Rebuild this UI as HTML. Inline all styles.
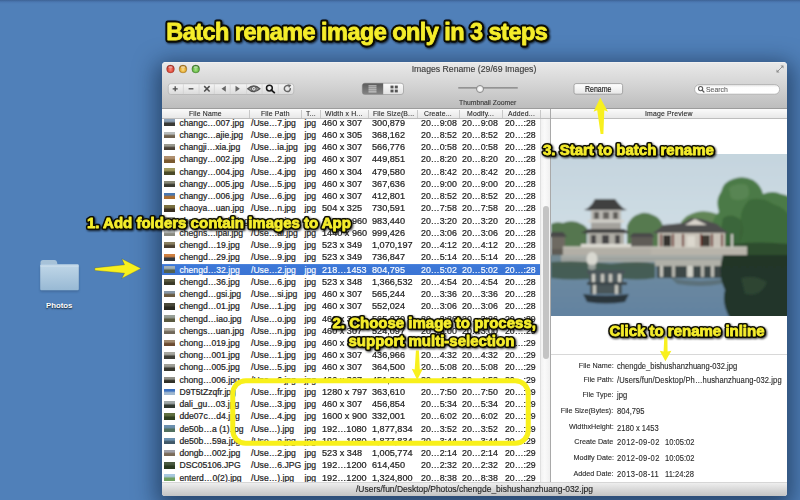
<!DOCTYPE html>
<html><head><meta charset="utf-8">
<style>
*{margin:0;padding:0;box-sizing:border-box}
html,body{width:800px;height:500px;overflow:hidden}
body{position:relative;background:linear-gradient(#3d6294 0,#4b78b2 2px,#5080b9 4px);font-family:"Liberation Sans",sans-serif;color:#222}
.a{position:absolute;white-space:nowrap}
#shadow{position:absolute;left:162px;top:62px;width:625px;height:434px;border-radius:4px;box-shadow:0 6px 22px 6px rgba(10,25,50,.55)}
#win{position:absolute;left:162px;top:62px;width:625px;height:434px;border-radius:4px 4px 3px 3px;overflow:hidden;background:#fff}
#toolbar{position:absolute;left:0;top:0;width:625px;height:47px;background:linear-gradient(#f4f4f4 0,#e8e8e8 1.5px,#d4d4d4 50%,#bdbdbd);border-bottom:1px solid #9c9c9c}
.tl{position:absolute;top:3px;width:8px;height:8px;border-radius:50%}
#title{position:absolute;left:0;top:2.3px;width:624px;text-align:center;font-size:9.1px;color:#3c3c3c;-webkit-text-stroke:0.15px #3c3c3c;transform:scaleX(0.956)}
#header{position:absolute;left:0;top:47px;width:625px;height:10px;background:linear-gradient(#fafafa,#e8e8e8);border-bottom:1px solid #bdbdbd}
#header span{position:absolute;top:0.3px;font-size:7.9px;line-height:9.5px;letter-spacing:0.2px;color:#262626;transform:scaleX(0.87);transform-origin:0 50%;-webkit-text-stroke:0.12px #2a2a2a}
.hsep{position:absolute;top:1px;width:1px;height:8px;background:#c8c8c8}
.row{position:absolute;left:0;width:378px;height:11px}
.row span{position:absolute;top:0.8px;font-size:8.6px;line-height:11px;color:#1e1e1e;white-space:nowrap;transform:scaleX(1.0);transform-origin:0 50%;-webkit-text-stroke:0.22px #1e1e1e}
.row.sel{background:linear-gradient(#5a8ee0 0,#3d78d8 1px,#3a74d4)}
.row.sel span{color:#fff;-webkit-text-stroke:0.15px #fff}
.th{position:absolute;left:2px;top:2.6px;width:11px;height:6.5px;display:block}
#status{position:absolute;left:0;top:420px;width:625px;height:14px;background:linear-gradient(#eeeeee,#dadada 45%,#c4c4c4);border-top:1px solid #d6d6d6}
.ann{position:absolute;white-space:nowrap;font-weight:bold;color:#fbf32d;
 text-shadow:-1px -1px 0 #1a1a08,1px -1px 0 #1a1a08,-1px 1px 0 #1a1a08,1px 1px 0 #1a1a08,0 1.5px 0 #1a1a08,1.5px 0 0 #1a1a08,-1.5px 0 0 #1a1a08,0 -1.5px 0 #1a1a08,1px 2px 3px rgba(0,0,0,.6)}
.info{position:absolute;font-size:8.5px;color:#2a2a2a;white-space:nowrap;transform:scaleX(0.892);transform-origin:0 50%;-webkit-text-stroke:0.12px #2a2a2a}
.lab{position:absolute;font-size:8px;color:#2a2a2a;white-space:nowrap;transform:scaleX(0.9);transform-origin:100% 50%;text-align:right;-webkit-text-stroke:0.12px #2a2a2a}
.btn{position:absolute;background:linear-gradient(#fdfdfd,#e4e4e4);border:1px solid #8a8a8a;border-radius:2px}
</style></head><body>
<div id="shadow"></div>
<div id="win">
  <div id="toolbar">
    <svg style="position:absolute;left:0;top:0" width="45" height="15">
<defs>
<radialGradient id="tr" cx="50%" cy="60%" r="55%"><stop offset="0" stop-color="#f58a7a"/><stop offset=".6" stop-color="#e0493a"/><stop offset="1" stop-color="#a8281e"/></radialGradient>
<radialGradient id="ty" cx="50%" cy="60%" r="55%"><stop offset="0" stop-color="#fbe08a"/><stop offset=".6" stop-color="#e6ac34"/><stop offset="1" stop-color="#a0701c"/></radialGradient>
<radialGradient id="tg" cx="50%" cy="60%" r="55%"><stop offset="0" stop-color="#a8e888"/><stop offset=".6" stop-color="#6cbc4a"/><stop offset="1" stop-color="#3e7e2a"/></radialGradient>
</defs>
<circle cx="8.5" cy="7" r="3.9" fill="url(#tr)" stroke="#8a3a30" stroke-opacity=".6" stroke-width=".6"/>
<circle cx="21" cy="7" r="3.9" fill="url(#ty)" stroke="#8a6a30" stroke-opacity=".6" stroke-width=".6"/>
<circle cx="33.75" cy="7" r="3.9" fill="url(#tg)" stroke="#3a6a30" stroke-opacity=".6" stroke-width=".6"/>
<ellipse cx="8.5" cy="5.3" rx="2.2" ry="1.3" fill="#fff" opacity=".45"/>
<ellipse cx="21" cy="5.3" rx="2.2" ry="1.3" fill="#fff" opacity=".45"/>
<ellipse cx="33.75" cy="5.3" rx="2.2" ry="1.3" fill="#fff" opacity=".45"/>
</svg>
    <div id="title">Images Rename (29/69 Images)</div>
  </div>
  <div id="header">
    <span style="left:27px">File Name</span><div class="hsep" style="left:86.5px"></div>
    <span style="left:99px">File Path</span><div class="hsep" style="left:139px"></div>
    <span style="left:144px">T...</span><div class="hsep" style="left:158px"></div>
    <span style="left:163px">Width x H...</span><div class="hsep" style="left:205.5px"></div>
    <span style="left:211px">File Size(B...</span><div class="hsep" style="left:254.5px"></div>
    <span style="left:262px">Create...</span><div class="hsep" style="left:297px"></div>
    <span style="left:304.5px">Modify...</span><div class="hsep" style="left:340px"></div>
    <span style="left:346px">Added...</span><div class="hsep" style="left:378px"></div>
    <div class="hsep" style="left:388px;top:0;height:10px;background:#b0b0b0"></div>
    <span style="left:483px">Image Preview</span>
  </div>
  <div id="rows">
<div class="row" style="top:54.90px"><i class="th" style="background:linear-gradient(#8fa3b8 0,#8fa3b8 32%,#3a3a36 62%,#3a3a36 100%)"></i><span style="left:17.5px;font-size:8.6px;transform:scaleX(1.0)">changc…007.jpg</span><span style="left:89.0px;font-size:8.6px;transform:scaleX(1.0)">/Use…7.jpg</span><span style="left:142.5px;font-size:8.6px;transform:scaleX(1.0)">jpg</span><span style="left:160.0px;font-size:8.9px;transform:scaleX(1.027)">460 x 307</span><span style="left:209.5px;font-size:8.9px;transform:scaleX(1.028)">300,879</span><span style="left:259.0px;font-size:8.9px;transform:scaleX(0.995)">20…9:08</span><span style="left:300.0px;font-size:8.9px;transform:scaleX(0.995)">20…9:08</span><span style="left:343.0px;font-size:8.9px;transform:scaleX(0.985)">20…:28</span></div>
<div class="row" style="top:67.14px"><i class="th" style="background:linear-gradient(#b8bcbc 0,#b8bcbc 32%,#6f6250 62%,#6f6250 100%)"></i><span style="left:17.5px;font-size:8.6px;transform:scaleX(1.0)">changc…ajie.jpg</span><span style="left:89.0px;font-size:8.6px;transform:scaleX(1.0)">/Use…e.jpg</span><span style="left:142.5px;font-size:8.6px;transform:scaleX(1.0)">jpg</span><span style="left:160.0px;font-size:8.9px;transform:scaleX(1.027)">460 x 305</span><span style="left:209.5px;font-size:8.9px;transform:scaleX(1.028)">368,162</span><span style="left:259.0px;font-size:8.9px;transform:scaleX(0.995)">20…8:52</span><span style="left:300.0px;font-size:8.9px;transform:scaleX(0.995)">20…8:52</span><span style="left:343.0px;font-size:8.9px;transform:scaleX(0.985)">20…:28</span></div>
<div class="row" style="top:79.38px"><i class="th" style="background:linear-gradient(#9a9a90 0,#9a9a90 32%,#4a4238 62%,#4a4238 100%)"></i><span style="left:17.5px;font-size:8.6px;transform:scaleX(1.0)">changji…xia.jpg</span><span style="left:89.0px;font-size:8.6px;transform:scaleX(1.0)">/Use…ia.jpg</span><span style="left:142.5px;font-size:8.6px;transform:scaleX(1.0)">jpg</span><span style="left:160.0px;font-size:8.9px;transform:scaleX(1.027)">460 x 307</span><span style="left:209.5px;font-size:8.9px;transform:scaleX(1.028)">566,776</span><span style="left:259.0px;font-size:8.9px;transform:scaleX(0.995)">20…0:58</span><span style="left:300.0px;font-size:8.9px;transform:scaleX(0.995)">20…0:58</span><span style="left:343.0px;font-size:8.9px;transform:scaleX(0.985)">20…:28</span></div>
<div class="row" style="top:91.62px"><i class="th" style="background:linear-gradient(#b09070 0,#b09070 32%,#7a5a30 62%,#7a5a30 100%)"></i><span style="left:17.5px;font-size:8.6px;transform:scaleX(1.0)">changy…002.jpg</span><span style="left:89.0px;font-size:8.6px;transform:scaleX(1.0)">/Use…2.jpg</span><span style="left:142.5px;font-size:8.6px;transform:scaleX(1.0)">jpg</span><span style="left:160.0px;font-size:8.9px;transform:scaleX(1.027)">460 x 307</span><span style="left:209.5px;font-size:8.9px;transform:scaleX(1.028)">449,851</span><span style="left:259.0px;font-size:8.9px;transform:scaleX(0.995)">20…8:20</span><span style="left:300.0px;font-size:8.9px;transform:scaleX(0.995)">20…8:20</span><span style="left:343.0px;font-size:8.9px;transform:scaleX(0.985)">20…:28</span></div>
<div class="row" style="top:103.86px"><i class="th" style="background:linear-gradient(#a09a60 0,#a09a60 32%,#4a4a28 62%,#4a4a28 100%)"></i><span style="left:17.5px;font-size:8.6px;transform:scaleX(1.0)">changy…004.jpg</span><span style="left:89.0px;font-size:8.6px;transform:scaleX(1.0)">/Use…4.jpg</span><span style="left:142.5px;font-size:8.6px;transform:scaleX(1.0)">jpg</span><span style="left:160.0px;font-size:8.9px;transform:scaleX(1.027)">460 x 304</span><span style="left:209.5px;font-size:8.9px;transform:scaleX(1.028)">479,580</span><span style="left:259.0px;font-size:8.9px;transform:scaleX(0.995)">20…8:42</span><span style="left:300.0px;font-size:8.9px;transform:scaleX(0.995)">20…8:42</span><span style="left:343.0px;font-size:8.9px;transform:scaleX(0.985)">20…:28</span></div>
<div class="row" style="top:116.10px"><i class="th" style="background:linear-gradient(#8a8a78 0,#8a8a78 32%,#3a3a30 62%,#3a3a30 100%)"></i><span style="left:17.5px;font-size:8.6px;transform:scaleX(1.0)">changy…005.jpg</span><span style="left:89.0px;font-size:8.6px;transform:scaleX(1.0)">/Use…5.jpg</span><span style="left:142.5px;font-size:8.6px;transform:scaleX(1.0)">jpg</span><span style="left:160.0px;font-size:8.9px;transform:scaleX(1.027)">460 x 307</span><span style="left:209.5px;font-size:8.9px;transform:scaleX(1.028)">367,636</span><span style="left:259.0px;font-size:8.9px;transform:scaleX(0.995)">20…9:00</span><span style="left:300.0px;font-size:8.9px;transform:scaleX(0.995)">20…9:00</span><span style="left:343.0px;font-size:8.9px;transform:scaleX(0.985)">20…:28</span></div>
<div class="row" style="top:128.34px"><i class="th" style="background:linear-gradient(#4a78b0 0,#4a78b0 32%,#b07030 62%,#b07030 100%)"></i><span style="left:17.5px;font-size:8.6px;transform:scaleX(1.0)">changy…006.jpg</span><span style="left:89.0px;font-size:8.6px;transform:scaleX(1.0)">/Use…6.jpg</span><span style="left:142.5px;font-size:8.6px;transform:scaleX(1.0)">jpg</span><span style="left:160.0px;font-size:8.9px;transform:scaleX(1.027)">460 x 307</span><span style="left:209.5px;font-size:8.9px;transform:scaleX(1.028)">412,801</span><span style="left:259.0px;font-size:8.9px;transform:scaleX(0.995)">20…8:52</span><span style="left:300.0px;font-size:8.9px;transform:scaleX(0.995)">20…8:52</span><span style="left:343.0px;font-size:8.9px;transform:scaleX(0.985)">20…:28</span></div>
<div class="row" style="top:140.58px"><i class="th" style="background:linear-gradient(#7a7040 0,#7a7040 32%,#3a3020 62%,#3a3020 100%)"></i><span style="left:17.5px;font-size:8.6px;transform:scaleX(1.0)">chaoya…uan.jpg</span><span style="left:89.0px;font-size:8.6px;transform:scaleX(1.0)">/Use…n.jpg</span><span style="left:142.5px;font-size:8.6px;transform:scaleX(1.0)">jpg</span><span style="left:160.0px;font-size:8.9px;transform:scaleX(1.027)">504 x 325</span><span style="left:209.5px;font-size:8.9px;transform:scaleX(1.028)">730,591</span><span style="left:259.0px;font-size:8.9px;transform:scaleX(0.995)">20…7:58</span><span style="left:300.0px;font-size:8.9px;transform:scaleX(0.995)">20…7:58</span><span style="left:343.0px;font-size:8.9px;transform:scaleX(0.985)">20…:28</span></div>
<div class="row" style="top:152.82px"><i class="th" style="background:linear-gradient(#9a9a90 0,#9a9a90 32%,#505048 62%,#505048 100%)"></i><span style="left:17.5px;font-size:8.6px;transform:scaleX(1.0)">chegns…ngde.jpg</span><span style="left:89.0px;font-size:8.6px;transform:scaleX(1.0)">/Use…e.jpg</span><span style="left:142.5px;font-size:8.6px;transform:scaleX(1.0)">jpg</span><span style="left:160.0px;font-size:8.9px;transform:scaleX(1.027)">1440 x 960</span><span style="left:209.5px;font-size:8.9px;transform:scaleX(1.028)">983,440</span><span style="left:259.0px;font-size:8.9px;transform:scaleX(0.995)">20…3:20</span><span style="left:300.0px;font-size:8.9px;transform:scaleX(0.995)">20…3:20</span><span style="left:343.0px;font-size:8.9px;transform:scaleX(0.985)">20…:28</span></div>
<div class="row" style="top:165.06px"><i class="th" style="background:linear-gradient(#c0c4c4 0,#c0c4c4 32%,#8a8a80 62%,#8a8a80 100%)"></i><span style="left:17.5px;font-size:8.6px;transform:scaleX(1.0)">chegns…ipai.jpg</span><span style="left:89.0px;font-size:8.6px;transform:scaleX(1.0)">/Use…ai.jpg</span><span style="left:142.5px;font-size:8.6px;transform:scaleX(1.0)">jpg</span><span style="left:160.0px;font-size:8.9px;transform:scaleX(1.027)">1440 x 960</span><span style="left:209.5px;font-size:8.9px;transform:scaleX(1.028)">999,426</span><span style="left:259.0px;font-size:8.9px;transform:scaleX(0.995)">20…3:06</span><span style="left:300.0px;font-size:8.9px;transform:scaleX(0.995)">20…3:06</span><span style="left:343.0px;font-size:8.9px;transform:scaleX(0.985)">20…:28</span></div>
<div class="row" style="top:177.30px"><i class="th" style="background:linear-gradient(#8a8060 0,#8a8060 32%,#4a4030 62%,#4a4030 100%)"></i><span style="left:17.5px;font-size:8.6px;transform:scaleX(1.0)">chengd…19.jpg</span><span style="left:89.0px;font-size:8.6px;transform:scaleX(1.0)">/Use…9.jpg</span><span style="left:142.5px;font-size:8.6px;transform:scaleX(1.0)">jpg</span><span style="left:160.0px;font-size:8.9px;transform:scaleX(1.027)">523 x 349</span><span style="left:209.5px;font-size:8.9px;transform:scaleX(1.028)">1,070,197</span><span style="left:259.0px;font-size:8.9px;transform:scaleX(0.995)">20…4:12</span><span style="left:300.0px;font-size:8.9px;transform:scaleX(0.995)">20…4:12</span><span style="left:343.0px;font-size:8.9px;transform:scaleX(0.985)">20…:28</span></div>
<div class="row" style="top:189.54px"><i class="th" style="background:linear-gradient(#d08040 0,#d08040 32%,#303840 62%,#303840 100%)"></i><span style="left:17.5px;font-size:8.6px;transform:scaleX(1.0)">chengd…29.jpg</span><span style="left:89.0px;font-size:8.6px;transform:scaleX(1.0)">/Use…9.jpg</span><span style="left:142.5px;font-size:8.6px;transform:scaleX(1.0)">jpg</span><span style="left:160.0px;font-size:8.9px;transform:scaleX(1.027)">523 x 349</span><span style="left:209.5px;font-size:8.9px;transform:scaleX(1.028)">736,847</span><span style="left:259.0px;font-size:8.9px;transform:scaleX(0.995)">20…5:14</span><span style="left:300.0px;font-size:8.9px;transform:scaleX(0.995)">20…5:14</span><span style="left:343.0px;font-size:8.9px;transform:scaleX(0.985)">20…:28</span></div>
<div class="row sel" style="top:201.78px"><i class="th" style="background:linear-gradient(#a0b0b8 0,#a0b0b8 32%,#506050 62%,#506050 100%)"></i><span style="left:17.5px;font-size:8.6px;transform:scaleX(1.0)">chengd…32.jpg</span><span style="left:89.0px;font-size:8.6px;transform:scaleX(1.0)">/Use…2.jpg</span><span style="left:142.5px;font-size:8.6px;transform:scaleX(1.0)">jpg</span><span style="left:160.0px;font-size:8.9px;transform:scaleX(1.027)">218…1453</span><span style="left:209.5px;font-size:8.9px;transform:scaleX(1.028)">804,795</span><span style="left:259.0px;font-size:8.9px;transform:scaleX(0.995)">20…5:02</span><span style="left:300.0px;font-size:8.9px;transform:scaleX(0.995)">20…5:02</span><span style="left:343.0px;font-size:8.9px;transform:scaleX(0.985)">20…:28</span></div>
<div class="row" style="top:214.02px"><i class="th" style="background:linear-gradient(#5a5a40 0,#5a5a40 32%,#3a3a28 62%,#3a3a28 100%)"></i><span style="left:17.5px;font-size:8.6px;transform:scaleX(1.0)">chengd…36.jpg</span><span style="left:89.0px;font-size:8.6px;transform:scaleX(1.0)">/Use…6.jpg</span><span style="left:142.5px;font-size:8.6px;transform:scaleX(1.0)">jpg</span><span style="left:160.0px;font-size:8.9px;transform:scaleX(1.027)">523 x 348</span><span style="left:209.5px;font-size:8.9px;transform:scaleX(1.028)">1,366,532</span><span style="left:259.0px;font-size:8.9px;transform:scaleX(0.995)">20…4:54</span><span style="left:300.0px;font-size:8.9px;transform:scaleX(0.995)">20…4:54</span><span style="left:343.0px;font-size:8.9px;transform:scaleX(0.985)">20…:28</span></div>
<div class="row" style="top:226.26px"><i class="th" style="background:linear-gradient(#8898a8 0,#8898a8 32%,#6a5a40 62%,#6a5a40 100%)"></i><span style="left:17.5px;font-size:8.6px;transform:scaleX(1.0)">chengd…gsi.jpg</span><span style="left:89.0px;font-size:8.6px;transform:scaleX(1.0)">/Use…si.jpg</span><span style="left:142.5px;font-size:8.6px;transform:scaleX(1.0)">jpg</span><span style="left:160.0px;font-size:8.9px;transform:scaleX(1.027)">460 x 307</span><span style="left:209.5px;font-size:8.9px;transform:scaleX(1.028)">565,244</span><span style="left:259.0px;font-size:8.9px;transform:scaleX(0.995)">20…3:36</span><span style="left:300.0px;font-size:8.9px;transform:scaleX(0.995)">20…3:36</span><span style="left:343.0px;font-size:8.9px;transform:scaleX(0.985)">20…:28</span></div>
<div class="row" style="top:238.50px"><i class="th" style="background:linear-gradient(#4a4a3a 0,#4a4a3a 32%,#2a2a20 62%,#2a2a20 100%)"></i><span style="left:17.5px;font-size:8.6px;transform:scaleX(1.0)">chengd…01.jpg</span><span style="left:89.0px;font-size:8.6px;transform:scaleX(1.0)">/Use…1.jpg</span><span style="left:142.5px;font-size:8.6px;transform:scaleX(1.0)">jpg</span><span style="left:160.0px;font-size:8.9px;transform:scaleX(1.027)">460 x 307</span><span style="left:209.5px;font-size:8.9px;transform:scaleX(1.028)">552,024</span><span style="left:259.0px;font-size:8.9px;transform:scaleX(0.995)">20…3:06</span><span style="left:300.0px;font-size:8.9px;transform:scaleX(0.995)">20…3:06</span><span style="left:343.0px;font-size:8.9px;transform:scaleX(0.985)">20…:28</span></div>
<div class="row" style="top:250.74px"><i class="th" style="background:linear-gradient(#98a098 0,#98a098 32%,#5a5a40 62%,#5a5a40 100%)"></i><span style="left:17.5px;font-size:8.6px;transform:scaleX(1.0)">chengd…iao.jpg</span><span style="left:89.0px;font-size:8.6px;transform:scaleX(1.0)">/Use…o.jpg</span><span style="left:142.5px;font-size:8.6px;transform:scaleX(1.0)">jpg</span><span style="left:160.0px;font-size:8.9px;transform:scaleX(1.027)">460 x 307</span><span style="left:209.5px;font-size:8.9px;transform:scaleX(1.028)">565,270</span><span style="left:259.0px;font-size:8.9px;transform:scaleX(0.995)">20…3:26</span><span style="left:300.0px;font-size:8.9px;transform:scaleX(0.995)">20…3:26</span><span style="left:343.0px;font-size:8.9px;transform:scaleX(0.985)">20…:29</span></div>
<div class="row" style="top:262.98px"><i class="th" style="background:linear-gradient(#b0aca0 0,#b0aca0 32%,#70685a 62%,#70685a 100%)"></i><span style="left:17.5px;font-size:8.6px;transform:scaleX(1.0)">chengs…uan.jpg</span><span style="left:89.0px;font-size:8.6px;transform:scaleX(1.0)">/Use…n.jpg</span><span style="left:142.5px;font-size:8.6px;transform:scaleX(1.0)">jpg</span><span style="left:160.0px;font-size:8.9px;transform:scaleX(1.027)">460 x 307</span><span style="left:209.5px;font-size:8.9px;transform:scaleX(1.028)">524,097</span><span style="left:259.0px;font-size:8.9px;transform:scaleX(0.995)">20…3:00</span><span style="left:300.0px;font-size:8.9px;transform:scaleX(0.995)">20…3:00</span><span style="left:343.0px;font-size:8.9px;transform:scaleX(0.985)">20…:29</span></div>
<div class="row" style="top:275.22px"><i class="th" style="background:linear-gradient(#a08a70 0,#a08a70 32%,#6a4a30 62%,#6a4a30 100%)"></i><span style="left:17.5px;font-size:8.6px;transform:scaleX(1.0)">chong…019.jpg</span><span style="left:89.0px;font-size:8.6px;transform:scaleX(1.0)">/Use…9.jpg</span><span style="left:142.5px;font-size:8.6px;transform:scaleX(1.0)">jpg</span><span style="left:160.0px;font-size:8.9px;transform:scaleX(1.027)">460 x 307</span><span style="left:209.5px;font-size:8.9px;transform:scaleX(1.028)">451,208</span><span style="left:259.0px;font-size:8.9px;transform:scaleX(0.995)">20…4:18</span><span style="left:300.0px;font-size:8.9px;transform:scaleX(0.995)">20…4:18</span><span style="left:343.0px;font-size:8.9px;transform:scaleX(0.985)">20…:29</span></div>
<div class="row" style="top:287.46px"><i class="th" style="background:linear-gradient(#a8a8a0 0,#a8a8a0 32%,#404038 62%,#404038 100%)"></i><span style="left:17.5px;font-size:8.6px;transform:scaleX(1.0)">chong…001.jpg</span><span style="left:89.0px;font-size:8.6px;transform:scaleX(1.0)">/Use…1.jpg</span><span style="left:142.5px;font-size:8.6px;transform:scaleX(1.0)">jpg</span><span style="left:160.0px;font-size:8.9px;transform:scaleX(1.027)">460 x 307</span><span style="left:209.5px;font-size:8.9px;transform:scaleX(1.028)">436,966</span><span style="left:259.0px;font-size:8.9px;transform:scaleX(0.995)">20…4:32</span><span style="left:300.0px;font-size:8.9px;transform:scaleX(0.995)">20…4:32</span><span style="left:343.0px;font-size:8.9px;transform:scaleX(0.985)">20…:29</span></div>
<div class="row" style="top:299.70px"><i class="th" style="background:linear-gradient(#a0a098 0,#a0a098 32%,#383830 62%,#383830 100%)"></i><span style="left:17.5px;font-size:8.6px;transform:scaleX(1.0)">chong…005.jpg</span><span style="left:89.0px;font-size:8.6px;transform:scaleX(1.0)">/Use…5.jpg</span><span style="left:142.5px;font-size:8.6px;transform:scaleX(1.0)">jpg</span><span style="left:160.0px;font-size:8.9px;transform:scaleX(1.027)">460 x 307</span><span style="left:209.5px;font-size:8.9px;transform:scaleX(1.028)">364,500</span><span style="left:259.0px;font-size:8.9px;transform:scaleX(0.995)">20…5:08</span><span style="left:300.0px;font-size:8.9px;transform:scaleX(0.995)">20…5:08</span><span style="left:343.0px;font-size:8.9px;transform:scaleX(0.985)">20…:29</span></div>
<div class="row" style="top:311.94px"><i class="th" style="background:linear-gradient(#909088 0,#909088 32%,#303028 62%,#303028 100%)"></i><span style="left:17.5px;font-size:8.6px;transform:scaleX(1.0)">chong…006.jpg</span><span style="left:89.0px;font-size:8.6px;transform:scaleX(1.0)">/Use…6.jpg</span><span style="left:142.5px;font-size:8.6px;transform:scaleX(1.0)">jpg</span><span style="left:160.0px;font-size:8.9px;transform:scaleX(1.027)">460 x 307</span><span style="left:209.5px;font-size:8.9px;transform:scaleX(1.028)">451,300</span><span style="left:259.0px;font-size:8.9px;transform:scaleX(0.995)">20…4:52</span><span style="left:300.0px;font-size:8.9px;transform:scaleX(0.995)">20…4:52</span><span style="left:343.0px;font-size:8.9px;transform:scaleX(0.985)">20…:29</span></div>
<div class="row" style="top:324.18px"><i class="th" style="background:linear-gradient(#3a70c0 0,#3a70c0 32%,#a0b8d0 62%,#a0b8d0 100%)"></i><span style="left:17.5px;font-size:8.6px;transform:scaleX(1.0)">D9T5tZzqfr.jpg</span><span style="left:89.0px;font-size:8.6px;transform:scaleX(1.0)">/Use…fr.jpg</span><span style="left:142.5px;font-size:8.6px;transform:scaleX(1.0)">jpg</span><span style="left:160.0px;font-size:8.9px;transform:scaleX(1.027)">1280 x 797</span><span style="left:209.5px;font-size:8.9px;transform:scaleX(1.028)">363,610</span><span style="left:259.0px;font-size:8.9px;transform:scaleX(0.995)">20…7:50</span><span style="left:300.0px;font-size:8.9px;transform:scaleX(0.995)">20…7:50</span><span style="left:343.0px;font-size:8.9px;transform:scaleX(0.985)">20…:29</span></div>
<div class="row" style="top:336.42px"><i class="th" style="background:linear-gradient(#a0a8a8 0,#a0a8a8 32%,#303830 62%,#303830 100%)"></i><span style="left:17.5px;font-size:8.6px;transform:scaleX(1.0)">dali_gu…03.jpg</span><span style="left:89.0px;font-size:8.6px;transform:scaleX(1.0)">/Use…3.jpg</span><span style="left:142.5px;font-size:8.6px;transform:scaleX(1.0)">jpg</span><span style="left:160.0px;font-size:8.9px;transform:scaleX(1.027)">460 x 307</span><span style="left:209.5px;font-size:8.9px;transform:scaleX(1.028)">456,854</span><span style="left:259.0px;font-size:8.9px;transform:scaleX(0.995)">20…5:34</span><span style="left:300.0px;font-size:8.9px;transform:scaleX(0.995)">20…5:34</span><span style="left:343.0px;font-size:8.9px;transform:scaleX(0.985)">20…:29</span></div>
<div class="row" style="top:348.66px"><i class="th" style="background:linear-gradient(#607040 0,#607040 32%,#304020 62%,#304020 100%)"></i><span style="left:17.5px;font-size:8.6px;transform:scaleX(1.0)">dde07c…d4.jpg</span><span style="left:89.0px;font-size:8.6px;transform:scaleX(1.0)">/Use…4.jpg</span><span style="left:142.5px;font-size:8.6px;transform:scaleX(1.0)">jpg</span><span style="left:160.0px;font-size:8.9px;transform:scaleX(1.027)">1600 x 900</span><span style="left:209.5px;font-size:8.9px;transform:scaleX(1.028)">332,001</span><span style="left:259.0px;font-size:8.9px;transform:scaleX(0.995)">20…6:02</span><span style="left:300.0px;font-size:8.9px;transform:scaleX(0.995)">20…6:02</span><span style="left:343.0px;font-size:8.9px;transform:scaleX(0.985)">20…:29</span></div>
<div class="row" style="top:360.90px"><i class="th" style="background:linear-gradient(#6a90b0 0,#6a90b0 32%,#507060 62%,#507060 100%)"></i><span style="left:17.5px;font-size:8.6px;transform:scaleX(1.0)">de50b…a (1).jpg</span><span style="left:89.0px;font-size:8.6px;transform:scaleX(1.0)">/Use…).jpg</span><span style="left:142.5px;font-size:8.6px;transform:scaleX(1.0)">jpg</span><span style="left:160.0px;font-size:8.9px;transform:scaleX(1.027)">192…1080</span><span style="left:209.5px;font-size:8.9px;transform:scaleX(1.028)">1,877,834</span><span style="left:259.0px;font-size:8.9px;transform:scaleX(0.995)">20…3:52</span><span style="left:300.0px;font-size:8.9px;transform:scaleX(0.995)">20…3:52</span><span style="left:343.0px;font-size:8.9px;transform:scaleX(0.985)">20…:29</span></div>
<div class="row" style="top:373.14px"><i class="th" style="background:linear-gradient(#6a90b0 0,#6a90b0 32%,#405868 62%,#405868 100%)"></i><span style="left:17.5px;font-size:8.6px;transform:scaleX(1.0)">de50b…59a.jpg</span><span style="left:89.0px;font-size:8.6px;transform:scaleX(1.0)">/Use…a.jpg</span><span style="left:142.5px;font-size:8.6px;transform:scaleX(1.0)">jpg</span><span style="left:160.0px;font-size:8.9px;transform:scaleX(1.027)">192…1080</span><span style="left:209.5px;font-size:8.9px;transform:scaleX(1.028)">1,877,834</span><span style="left:259.0px;font-size:8.9px;transform:scaleX(0.995)">20…3:44</span><span style="left:300.0px;font-size:8.9px;transform:scaleX(0.995)">20…3:44</span><span style="left:343.0px;font-size:8.9px;transform:scaleX(0.985)">20…:29</span></div>
<div class="row" style="top:385.38px"><i class="th" style="background:linear-gradient(#a0a0a8 0,#a0a0a8 32%,#7a6a58 62%,#7a6a58 100%)"></i><span style="left:17.5px;font-size:8.6px;transform:scaleX(1.0)">dongb…002.jpg</span><span style="left:89.0px;font-size:8.6px;transform:scaleX(1.0)">/Use…2.jpg</span><span style="left:142.5px;font-size:8.6px;transform:scaleX(1.0)">jpg</span><span style="left:160.0px;font-size:8.9px;transform:scaleX(1.027)">523 x 348</span><span style="left:209.5px;font-size:8.9px;transform:scaleX(1.028)">1,005,774</span><span style="left:259.0px;font-size:8.9px;transform:scaleX(0.995)">20…2:14</span><span style="left:300.0px;font-size:8.9px;transform:scaleX(0.995)">20…2:14</span><span style="left:343.0px;font-size:8.9px;transform:scaleX(0.985)">20…:29</span></div>
<div class="row" style="top:397.62px"><i class="th" style="background:linear-gradient(#4a5a40 0,#4a5a40 32%,#2a3a20 62%,#2a3a20 100%)"></i><span style="left:17.5px;font-size:8.6px;transform:scaleX(1.0)">DSC05106.JPG</span><span style="left:89.0px;font-size:8.6px;transform:scaleX(1.0)">/Use…6.JPG</span><span style="left:142.5px;font-size:8.6px;transform:scaleX(1.0)">jpg</span><span style="left:160.0px;font-size:8.9px;transform:scaleX(1.027)">192…1200</span><span style="left:209.5px;font-size:8.9px;transform:scaleX(1.028)">614,450</span><span style="left:259.0px;font-size:8.9px;transform:scaleX(0.995)">20…2:32</span><span style="left:300.0px;font-size:8.9px;transform:scaleX(0.995)">20…2:32</span><span style="left:343.0px;font-size:8.9px;transform:scaleX(0.985)">20…:29</span></div>
<div class="row" style="top:409.86px"><i class="th" style="background:linear-gradient(#a8c8e0 0,#a8c8e0 32%,#70a060 62%,#70a060 100%)"></i><span style="left:17.5px;font-size:8.6px;transform:scaleX(1.0)">enterd…0(2).jpg</span><span style="left:89.0px;font-size:8.6px;transform:scaleX(1.0)">/Use…).jpg</span><span style="left:142.5px;font-size:8.6px;transform:scaleX(1.0)">jpg</span><span style="left:160.0px;font-size:8.9px;transform:scaleX(1.027)">192…1200</span><span style="left:209.5px;font-size:8.9px;transform:scaleX(1.028)">1,324,800</span><span style="left:259.0px;font-size:8.9px;transform:scaleX(0.995)">20…8:38</span><span style="left:300.0px;font-size:8.9px;transform:scaleX(0.995)">20…8:38</span><span style="left:343.0px;font-size:8.9px;transform:scaleX(0.985)">20…:29</span></div>
  </div>
  <!-- scrollbar track -->
  <div style="position:absolute;left:378px;top:57px;width:10px;height:363px;background:linear-gradient(90deg,#f2f2f2,#fafafa 40%,#f0f0f0);border-left:1px solid #e0e0e0"></div>
  <div style="position:absolute;left:381px;top:144px;width:6px;height:153px;border-radius:3px;background:#c4c4c4"></div>
  <!-- divider -->
  <div style="position:absolute;left:388px;top:47px;width:1px;height:373px;background:#a9a9a9"></div>
  <!-- preview image -->
  <div id="pimg" style="position:absolute;left:389px;top:92px;width:236px;height:162px;overflow:hidden"><svg width="236" height="162" viewBox="0 0 236 162">
<defs>
<linearGradient id="sky" x1="0" y1="0" x2="0" y2="1"><stop offset="0" stop-color="#c4d4de"/><stop offset="0.5" stop-color="#cfdde4"/><stop offset="1" stop-color="#d8e2e6"/></linearGradient>
<linearGradient id="wat" x1="0" y1="0" x2="0" y2="1"><stop offset="0" stop-color="#74888f"/><stop offset="0.4" stop-color="#6a88a0"/><stop offset="1" stop-color="#6282a0"/></linearGradient>
<linearGradient id="trf" x1="0" y1="0" x2="0" y2="1"><stop offset="0" stop-color="#243428"/><stop offset="1" stop-color="#22362c"/></linearGradient>
<filter id="soft" x="-5%" y="-5%" width="110%" height="110%"><feGaussianBlur stdDeviation="1"/></filter>
</defs>
<g filter="url(#soft)">
<rect x="-4" y="-4" width="244" height="170" fill="url(#sky)"/>
<!-- distant trees -->
<path d="M0,70 Q5,67 12,69 Q18,66 26,68 Q32,70 36,74 L36,96 L0,96 Z" fill="#557650"/>
<path d="M76,72 Q80,62 88,60 Q94,57 102,61 Q110,64 112,72 L112,96 L76,96 Z" fill="#577a50"/>
<path d="M130,68 Q136,60 146,58 Q156,56 166,60 L168,96 L130,96 Z" fill="#628656"/>
<!-- big tree right -->
<path d="M168,58 Q164,46 170,38 Q172,28 182,25 Q192,21 202,26 Q210,31 212,40 Q222,36 230,40 Q240,42 240,46 L240,104 L166,104 Q160,92 162,80 Q158,68 168,58 Z" fill="#4c7a46"/>
<path d="M198,46 Q210,42 222,50 Q240,56 240,70 L240,104 L192,104 Q186,86 190,70 Q188,56 198,46 Z" fill="#3c6a3a"/>
<path d="M172,64 Q180,58 190,66 Q196,80 186,92 Q174,96 168,86 Z" fill="#3a6438" opacity=".9"/>
<path d="M164,92 Q200,86 240,90 L240,104 L164,104 Z" fill="#2e4e2e"/>
<path d="M178,34 Q186,28 196,31 Q200,38 196,44 Q186,48 180,44 Z" fill="#5e8a58" opacity=".7"/>
<!-- left small building -->
<rect x="0" y="82" width="14" height="14" fill="#6e6a62"/>
<path d="M-2,83 L16,83 L12,78 L0,78 Z" fill="#4a4a4a"/>
<!-- pagoda -->
<path d="M33,56 Q38,54 41,50 L44,45 L64,45 L68,50 Q71,54 76,56 Q54,58 33,56 Z" fill="#404040"/>
<rect x="40" y="56" width="30" height="11" fill="#b8b6b0"/>
<rect x="43" y="58" width="5" height="7" fill="#5e5c58"/><rect x="52" y="58" width="6" height="7" fill="#66645e"/><rect x="62" y="58" width="5" height="7" fill="#5e5c58"/>
<rect x="37" y="66" width="36" height="2.5" fill="#d4d2ca"/>
<rect x="40" y="68.5" width="30" height="6.5" fill="#a4a29c"/>
<path d="M30,79 Q34,77 37,75 L73,75 Q76,77 79,79 Q55,81 30,79 Z" fill="#3e3e3e"/>
<rect x="37" y="79" width="36" height="13" fill="#aeaca4"/>
<rect x="40" y="81" width="5" height="11" fill="#4a4a48"/><rect x="51" y="81" width="7" height="11" fill="#444"/><rect x="64" y="81" width="5" height="11" fill="#4a4a48"/>
<rect x="30" y="90" width="50" height="3" fill="#dedcd4"/>
<!-- connecting building -->
<path d="M78,83 L104,83 L100,79 L82,79 Z" fill="#4a4a4a"/>
<rect x="80" y="83" width="22" height="10" fill="#5e5c56"/>
<!-- pavilion -->
<path d="M101,79 Q106,77 112,71 L132,69 L140,64 L150,65 L166,70 Q172,76 178,79 Q140,82 101,79 Z" fill="#505050"/>
<path d="M134,71 L144,65 L156,71 Z" fill="#d8d3ca"/>
<rect x="107" y="79" width="67" height="15" fill="#c8c2b8"/>
<rect x="109" y="80" width="2" height="14" fill="#6e2a20"/><rect x="121" y="80" width="2" height="14" fill="#6e2a20"/>
<rect x="131" y="80" width="2" height="14" fill="#6e2a20"/><rect x="149" y="80" width="2" height="14" fill="#6e2a20"/>
<rect x="160" y="80" width="2" height="14" fill="#6e2a20"/><rect x="170" y="80" width="2" height="14" fill="#6e2a20"/>
<rect x="112" y="81" width="8" height="12" fill="#34322e"/><rect x="151" y="81" width="8" height="12" fill="#403a36"/>
<rect x="136" y="82" width="8" height="11" fill="#dcd8ce"/>
<rect x="180" y="80" width="2" height="14" fill="#ccccc4"/>
<!-- platform -->
<rect x="12" y="93" width="93" height="8" fill="#b2afa6"/>
<rect x="100" y="93" width="96" height="8" fill="#b8b4aa"/>
<rect x="12" y="92.5" width="184" height="1.2" fill="#d0cdc4"/>
<rect x="0" y="95" width="12" height="7" fill="#5e5b54"/>
<!-- water -->
<rect x="-4" y="101" width="244" height="65" fill="url(#wat)"/>
<rect x="10" y="101" width="186" height="7" fill="#a6aaa6"/>
<rect x="10" y="104.5" width="186" height="1" fill="#8e9490"/>
<!-- tree reflections -->
<path d="M0,108 Q30,106 60,110 Q90,106 104,110 L104,124 Q80,128 60,122 Q30,128 0,124 Z" fill="#3e5648" opacity=".85"/>
<!-- pavilion reflection -->
<rect x="104" y="106" width="92" height="6" fill="#b0b0a8"/>
<rect x="106" y="112" width="74" height="12" fill="#3c4646"/>
<rect x="109" y="112" width="3" height="11" fill="#c8c8c0"/><rect x="121" y="112" width="3" height="11" fill="#b8b8b0"/><rect x="136" y="112" width="6" height="11" fill="#d0d0c8"/><rect x="150" y="112" width="3" height="11" fill="#b8b8b0"/><rect x="160" y="112" width="3" height="11" fill="#c0c0b8"/>
<path d="M120,124 Q150,130 176,124 L170,130 Q150,134 126,130 Z" fill="#56686a" opacity=".7"/>
<!-- pagoda reflection -->
<rect x="36" y="116" width="38" height="4" fill="#4a5458"/>
<rect x="38" y="120" width="34" height="8" fill="#4e585c"/>
<rect x="41" y="120" width="3" height="8" fill="#d0d0c8"/><rect x="50" y="120" width="3" height="8" fill="#c8c8c0"/><rect x="58" y="120" width="3" height="8" fill="#c8c8c0"/><rect x="67" y="120" width="3" height="8" fill="#d0d0c8"/>
<rect x="36" y="128" width="40" height="3" fill="#3a4448"/>
<rect x="39" y="131" width="32" height="9" fill="#4a5458"/>
<rect x="42" y="131" width="3" height="9" fill="#c8c8c0"/><rect x="64" y="131" width="3" height="9" fill="#c8c8c0"/>
<path d="M32,140 Q55,143 78,140 L74,148 Q55,151 36,148 Z" fill="#2a343a"/>
<!-- right dark reflection -->
<path d="M172,101 L240,101 L240,166 L180,166 Q170,150 174,136 Q166,120 172,101 Z" fill="url(#trf)"/>
<path d="M190,124 Q204,120 216,128 Q210,144 194,140 Z" fill="#34503a" opacity=".6"/>
<ellipse cx="41" cy="105" rx="5.5" ry="7" fill="#d8d8d0"/>
<ellipse cx="41" cy="113" rx="4" ry="3" fill="#a8aca8" opacity=".8"/>
</g>
</svg>
</div>
  <div style="position:absolute;left:389px;top:291.5px;width:236px;height:1px;background:#d8d8d8"></div>
  <div id="status"></div>
</div>
<div id="stxt" class="a" style="left:355.5px;top:483.6px;font-size:8.6px;color:#262626;transform:scaleX(0.984);transform-origin:0 50%;-webkit-text-stroke:0.15px #262626">/Users/fun/Desktop/Photos/chengde_bishushanzhuang-032.jpg</div>

<!-- info labels -->
<div class="lab" style="right:186.6px;top:361px">File Name:</div>
<div class="lab" style="right:186.6px;top:375px">File Path:</div>
<div class="lab" style="right:186.6px;top:390px">File Type:</div>
<div class="lab" style="right:186.6px;top:406px">File Size(Bytes):</div>
<div class="lab" style="right:186.6px;top:422px">WidthxHeight:</div>
<div class="lab" style="right:186.6px;top:437px">Create Date</div>
<div class="lab" style="right:186.6px;top:453px">Modify Date:</div>
<div class="lab" style="right:186.6px;top:469px">Added Date:</div>
<div class="info" style="left:617px;top:361px">chengde_bishushanzhuang-032.jpg</div>
<div class="info" style="left:617px;top:375px;letter-spacing:0.11px">/Users/fun/Desktop/Ph…hushanzhuang-032.jpg</div>
<div class="info" style="left:617px;top:390px">jpg</div>
<div class="info" style="left:617px;top:406px">804,795</div>
<div class="info" style="left:617px;top:423px">2180 x 1453</div>
<div class="info" style="left:617px;top:437px;letter-spacing:0.45px">2012-09-02</div><div class="info" style="left:665px;top:437px">10:05:02</div>
<div class="info" style="left:617px;top:453px;letter-spacing:0.45px">2012-09-02</div><div class="info" style="left:665px;top:453px">10:05:02</div>
<div class="info" style="left:617px;top:469px;letter-spacing:0.45px">2013-08-11</div><div class="info" style="left:665px;top:469px">11:24:28</div>

<!-- toolbar controls -->
<svg style="position:absolute;left:166px;top:82px" width="130" height="15" viewBox="166 82 130 15">
<defs><linearGradient id="bg1" x1="0" y1="0" x2="0" y2="1"><stop offset="0" stop-color="#f6f6f6"/><stop offset="1" stop-color="#dadada"/></linearGradient></defs>
<rect x="168.25" y="83.75" width="125.5" height="10.75" rx="2.5" fill="url(#bg1)" stroke="#b0b0b0" stroke-width="0.7"/>
<g stroke="#d0d0d0" stroke-width="0.7"><path d="M183.4,84.2V94.1M199.1,84.2V94.1M214.4,84.2V94.1M230.2,84.2V94.1M246.6,84.2V94.1M262.1,84.2V94.1M278.3,84.2V94.1"/></g>
<g stroke="#4d4d4d" stroke-width="1.3" fill="none">
<path d="M172.7,88.8H177.7M175.2,86.3V91.3"/>
<path d="M188.6,88.8H193.4"/>
<path d="M204.2,86.1L209.6,91.5M209.6,86.1L204.2,91.5" stroke-width="1.5"/>
</g>
<path d="M221.5,88.8L225.8,85.8V91.8Z" fill="#666"/>
<path d="M239.8,88.8L235.5,85.8V91.8Z" fill="#666"/>
<path d="M247.8,88.8Q253.8,83.2 259.8,88.8Q253.8,94.4 247.8,88.8Z" fill="#9a9a9a" stroke="#555" stroke-width="1.3"/>
<circle cx="253.8" cy="88.8" r="2.3" fill="#e8e8e8" stroke="#4a4a4a" stroke-width="0.9"/>
<circle cx="253.8" cy="88.8" r="0.8" fill="#6a6a6a"/>
<circle cx="269.4" cy="88.1" r="2.9" fill="#f0f0f0" stroke="#1a1a1a" stroke-width="1.5"/>
<path d="M271.4,90.1L274.3,92.6" stroke="#1a1a1a" stroke-width="1.9" stroke-linecap="round"/>
<path d="M290.3,88.2A3,3 0 1 1 288.6,85.9" fill="none" stroke="#666" stroke-width="1.5"/>
<path d="M287.6,84.3L291.3,85.1L289,88Z" fill="#666"/>
</svg>
<svg style="position:absolute;left:360px;top:81px" width="48" height="16" viewBox="360 81 48 16">
<defs><linearGradient id="sg1" x1="0" y1="0" x2="0" y2="1"><stop offset="0" stop-color="#fbfbfb"/><stop offset="1" stop-color="#e2e2e2"/></linearGradient>
<linearGradient id="sg2" x1="0" y1="0" x2="0" y2="1"><stop offset="0" stop-color="#5c5c5c"/><stop offset="1" stop-color="#858585"/></linearGradient></defs>
<rect x="362.3" y="83.2" width="41.2" height="11.3" rx="2.5" fill="url(#sg1)" stroke="#9a9a9a" stroke-width="0.7"/>
<path d="M364.8,83.2H383.2V94.5H364.8A2.5,2.5 0 0 1 362.3,92V85.7A2.5,2.5 0 0 1 364.8,83.2Z" fill="url(#sg2)"/>
<g stroke="#e8e8e8" stroke-width="0.9"><path d="M368.5,85.9H376.5M368.5,87.9H376.5M368.5,89.9H376.5M368.5,91.9H376.5"/></g>
<g fill="#555"><rect x="390.5" y="85.6" width="3" height="2.8"/><rect x="394.8" y="85.6" width="3" height="2.8"/><rect x="390.5" y="89.6" width="3" height="2.8"/><rect x="394.8" y="89.6" width="3" height="2.8"/></g>
</svg>
<div style="position:absolute;left:458px;top:87.2px;width:60px;height:1.8px;background:linear-gradient(#8a8a8a,#b0b0b0);border-radius:1px"></div>
<div style="position:absolute;left:476px;top:85px;width:8px;height:8px;border-radius:50%;background:radial-gradient(#fff,#e0e0e0);border:1px solid #8a8a8a"></div>
<div class="a" style="left:459px;top:98.6px;font-size:7px;color:#333;transform:scaleX(0.975);transform-origin:0 50%;-webkit-text-stroke:0.1px #333">Thumbnail Zoomer</div>
<svg style="position:absolute;left:572px;top:82px" width="53" height="15" viewBox="572 82 53 15">
<defs><linearGradient id="rb" x1="0" y1="0" x2="0" y2="1"><stop offset="0" stop-color="#fefefe"/><stop offset="0.5" stop-color="#f4f4f4"/><stop offset="1" stop-color="#e6e6e6"/></linearGradient></defs>
<rect x="574" y="83.6" width="48.6" height="10.6" rx="2" fill="url(#rb)" stroke="#969696" stroke-width="0.8"/>
</svg>
<div class="a" style="left:584.6px;top:84.5px;font-size:8.2px;color:#1a1a1a;transform:scaleX(0.855);transform-origin:0 50%;-webkit-text-stroke:0.15px #1a1a1a">Rename</div>
<svg style="position:absolute;left:692px;top:82px" width="92" height="15" viewBox="692 82 92 15">
<defs><linearGradient id="sf" x1="0" y1="0" x2="0" y2="1"><stop offset="0" stop-color="#e4e4e4"/><stop offset="0.3" stop-color="#fdfdfd"/><stop offset="1" stop-color="#fff"/></linearGradient></defs>
<rect x="694.6" y="84.6" width="85" height="9.6" rx="4.8" fill="url(#sf)" stroke="#a8a8a8" stroke-width="0.8"/>
<circle cx="700.6" cy="88.6" r="2.1" fill="none" stroke="#5a5a5a" stroke-width="1.1"/>
<path d="M702.1,90.1L703.9,92" stroke="#5a5a5a" stroke-width="1.3" stroke-linecap="round"/>
</svg>
<div class="a" style="left:706.2px;top:85.2px;font-size:8px;color:#5e5e5e;-webkit-text-stroke:0.1px #5e5e5e;transform:scaleX(0.86);transform-origin:0 50%">Search</div>
<svg style="position:absolute;left:775px;top:64px" width="10" height="10" viewBox="775 64 10 10">
<g stroke="#8a8a8a" stroke-width="0.9" fill="none"><path d="M777,72L783,66"/></g>
<path d="M780.5,65.5H783.5V68.5Z" fill="#8a8a8a"/><path d="M776.5,69.5V72.5H779.5Z" fill="#8a8a8a"/>
</svg>

<!-- desktop folder -->
<svg style="position:absolute;left:36px;top:256px" width="48" height="40" viewBox="36 256 48 40">
<defs><linearGradient id="fd" x1="0" y1="0" x2="0" y2="1"><stop offset="0" stop-color="#c0d7e8"/><stop offset="1" stop-color="#98b9d4"/></linearGradient>
<filter id="fsh"><feGaussianBlur stdDeviation="0.8"/></filter></defs>
<rect x="40" y="266" width="39" height="26" rx="1.5" fill="#2a4a70" opacity=".35" filter="url(#fsh)"/>
<path d="M40.5,262.5Q40.5,260 43,260H54.5Q56.5,260 57,262L57.5,264.5H40.5Z" fill="#a7c2d8"/>
<rect x="40.2" y="264.3" width="38.6" height="26" rx="1.2" fill="url(#fd)"/>
<path d="M40.5,266.2H78.5" stroke="#d6e5f0" stroke-width=".6"/>
</svg>
<div class="a" style="left:46px;top:300.5px;font-size:7.8px;font-weight:bold;color:#fff;text-shadow:0 0.8px 1.5px rgba(0,0,0,.8)">Photos</div>

<!-- annotations -->
<svg style="position:absolute;left:0;top:0" width="800" height="500">
  <rect x="232.75" y="380.75" width="295.5" height="62.5" rx="13" ry="13" fill="none" stroke="#f8f01a" stroke-width="5"/>
  <path d="M94.8,267.9 L124.5,264.8 L121.8,258.8 L141,268.4 L121.8,278.4 L124.5,273.2 L94.8,270.4 Z" fill="#f8f01e" stroke="#3a3f3a" stroke-opacity=".45" stroke-width=".6"/>
  <path d="M600.6,134 L597.2,110.3 L593.5,111.8 L600.2,97.8 L608,111.8 L604.3,110.3 L603.4,134 Z" fill="#f8f01e"/>
  <path d="M415.9,350.5 L418.9,350.5 L419.8,369.6 L422.9,368.8 L417.2,380 L411.7,368.8 L414.7,369.6 Z" fill="#f8f01e"/>
  <path d="M664.3,336.5 L667.4,336.5 L667.6,351.6 L671.4,350.8 L665.4,361.2 L659.8,350.8 L663.6,351.6 Z" fill="#f8f01e"/>
</svg>
<svg style="position:absolute;left:0;top:0" width="800" height="500">
<defs><filter id="ds" x="-5%" y="-30%" width="110%" height="160%"><feGaussianBlur in="SourceAlpha" stdDeviation="1.2"/><feOffset dx="0.5" dy="1.2" result="b"/><feComponentTransfer in="b" result="c"><feFuncA type="linear" slope="0.8"/></feComponentTransfer><feMerge><feMergeNode in="c"/><feMergeNode in="SourceGraphic"/></feMerge></filter></defs>
<g font-family="Liberation Sans" font-weight="bold" stroke-linejoin="round" filter="url(#ds)">
<g fill="#0c0c06" stroke="#0c0c06" stroke-width="4">
<text x="166.3" y="39.7" font-size="23.5" letter-spacing="-0.55" stroke-width="4.8">Batch rename image only in 3 steps</text>
<text x="87" y="227.5" font-size="15">1. Add folders contain images to App</text>
<text x="332.5" y="327.5" font-size="15">2. Choose image to process,</text>
<text x="348.5" y="346" font-size="15">support multi-selection</text>
<text x="543" y="155" font-size="15">3. Start to batch rename</text>
<text x="609.5" y="336.4" font-size="15">Click to rename inline</text>
</g>
<g fill="#f5ed2c" stroke="#f5ed2c" stroke-width="0.8">
<text x="166.3" y="39.7" font-size="23.5" letter-spacing="-0.55">Batch rename image only in 3 steps</text>
<text x="87" y="227.5" font-size="15">1. Add folders contain images to App</text>
<text x="332.5" y="327.5" font-size="15">2. Choose image to process,</text>
<text x="348.5" y="346" font-size="15">support multi-selection</text>
<text x="543" y="155" font-size="15">3. Start to batch rename</text>
<text x="609.5" y="336.4" font-size="15">Click to rename inline</text>
</g></g></svg>
</body></html>
